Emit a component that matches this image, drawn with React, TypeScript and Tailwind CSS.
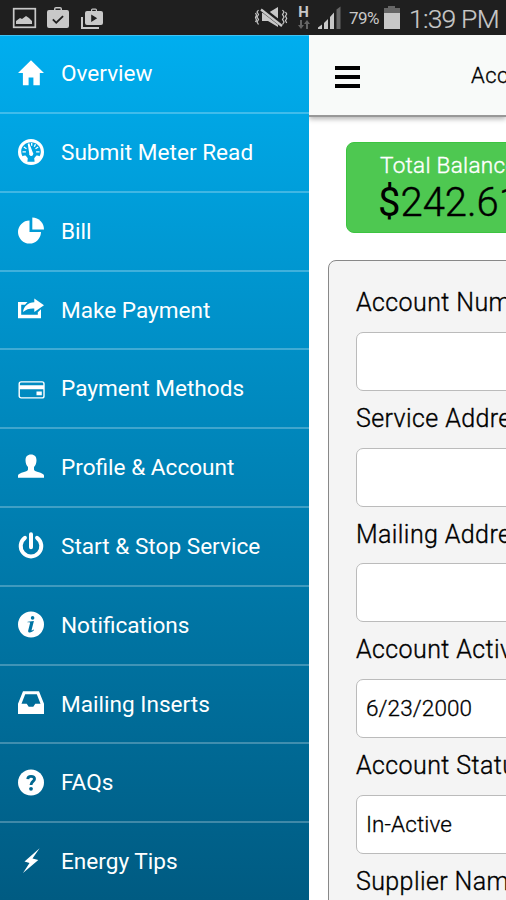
import type { ReactNode } from "react";

type MenuItem = { label: string; icon: ReactNode };

const menuItems: MenuItem[] = [
  {
    label: "Overview",
    icon: <path d="M13-.8 26 12.100h-4.200V24.200h-6.400v-7.800h-4.800v7.800H4.900V12.100H0z" />,
  },
  {
    label: "Submit Meter Read",
    icon: (
      <>
        <path
          fillRule="evenodd"
          d="M13 0a13 13 0 1 0 0 26 13 13 0 0 0 0-26Zm0 3.300c5.500 0 9.800 4 9.800 9.200 0 1.900-.4 3.300-1.300 4.700-.9-.5-2.100-.7-3.300-.5l-2 2.600.4 3.500H9.400l.4-3.500-2-2.600c-1.200-.2-2.400 0-3.300.5a8.700 8.700 0 0 1-1.300-4.700c0-5.200 4.300-9.200 9.800-9.200Z"
        />
        <path d="m9.700 4.800 1.600-.5 3.400 9a2.100 2.100 0 1 1-3.500.9z" />
        <path
          d="M4.500 12.800h3.400M18.100 12.800h3.400M5.800 8l2.700 1.700M20.200 8l-2.700 1.700M13.700 4v2.800M17.500 5.200l-1.200 2.600"
          stroke="currentColor"
          strokeWidth="1.300"
        />
      </>
    ),
  },
  {
    label: "Bill",
    icon: (
      <>
        <path d="M11.500 2.600v11.500H23A11.500 11.500 0 1 1 11.500 2.600Z" />
        <path d="M14.300-.4A11.700 11.700 0 0 1 26 11.600H14.300Z" />
      </>
    ),
  },
  {
    label: "Make Payment",
    icon: (
      <>
        <path d="M0 5h9.500L7 7.800H3.200v10h16.600v-2.600l3.200-3V21.200H0z" />
        <path d="M16.300 1.500 26 8.300l-9.700 6.800v-3.600C11.500 11.200 8.500 12.300 5 15 5.600 9.500 10 5.600 16.300 5.300z" />
      </>
    ),
  },
  {
    label: "Payment Methods",
    icon: (
      <>
        <rect x="1.200" y="5.900" width="24.800" height="16" rx="2" fill="none" stroke="currentColor" strokeWidth="1.400" />
        <path d="M1.200 9.200h24.800v4H1.200zM18.500 15.500h5.300v3.800h-5.300z" />
      </>
    ),
  },
  {
    label: "Profile & Account",
    icon: (
      <path d="M13 -.5c3.600 0 5.500 2.200 5.500 5.700 0 3-1 5.300-2.500 6.800v2.400c0 1.300 1.700 1.700 4 2.500 3.700 1.200 6 2 6 3.500v2.300H0v-2.300c0-1.500 2.300-2.300 6-3.500 2.300-.8 4-1.200 4-2.500v-2.400c-1.500-1.500-2.500-3.800-2.500-6.800C7.500 1.700 9.400-.5 13-.5Z" />
    ),
  },
  {
    label: "Start & Stop Service",
    icon: (
      <path
        d="M13 1.200v13M6.900 4.800a10.300 10.300 0 1 0 12.200 0"
        fill="none"
        stroke="currentColor"
        strokeWidth="4"
        strokeLinecap="round"
      />
    ),
  },
  {
    label: "Notifications",
    icon: (
      <path
        fillRule="evenodd"
        d="M13 -.5a13 13 0 1 0 0 26 13 13 0 0 0 0-26Zm1.600 4.600a1.800 1.800 0 1 1 0 3.600 1.800 1.800 0 0 1 0-3.600ZM9.600 9.700l6.300-.8-2.300 9c-.3 1.200.7.8 2-.4l.5.600c-1.800 2.400-6.600 3.800-5.900.3l1.900-7.500c.1-.4-.5-.6-2.500-.5Z"
      />
    ),
  },
  {
    label: "Mailing Inserts",
    icon: (
      <path
        fillRule="evenodd"
        d="M5 .3h16l5 12.500v10.200H0V12.800Zm2.200 3L3.500 12.800h5.200l2 3h4.600l2-3h5.200L18.800 3.300Z"
      />
    ),
  },
  {
    label: "FAQs",
    icon: (
      <>
        <circle cx="13" cy="12.500" r="13" />
        <path
          className="text-[#00678f]"
          d="M9.800 9.100c.1-2 1.400-2.700 3.200-2.700 2.200 0 3.500.9 3.500 2.600 0 2.500-3.500 2.500-3.500 6"
          fill="none"
          stroke="currentColor"
          strokeWidth="2.900"
        />
        <circle cx="13" cy="18.800" r="1.900" className="fill-[#00678f]" />
      </>
    ),
  },
  {
    label: "Energy Tips",
    icon: <path d="M21.600-.8 14.500 9.500l5.800 1.400L5 23.900l6.500-9.800-5-1.600z" />,
  },
];

const fields = [
  { label: "Account Number", value: "" },
  { label: "Service Address", value: "" },
  { label: "Mailing Address", value: "" },
  { label: "Account Active Date", value: "6/23/2000" },
  { label: "Account Status", value: "In-Active" },
  { label: "Supplier Name", value: "" },
];

function StatusBar() {
  return (
    <div className="flex h-[35px] shrink-0 items-center bg-[#1f1f1f] text-[#c8c8c8]">
      <svg className="h-[35px] w-[110px]" viewBox="0 0 110 35" fill="currentColor">
        <rect x="13.700" y="8.700" width="21.600" height="18.600" fill="none" stroke="currentColor" strokeWidth="1.700" />
        <path d="M16 24v-3l4-3 2 1 4-3 3 2 3 3v3z" />
        <path
          fillRule="evenodd"
          d="M49 10h5V9q0-2 2-2h4q2 0 2 2v1h5q2 0 2 2v14q0 2-2 2H49q-2 0-2-2V12q0-2 2-2Zm6.500 0h5V8.500h-5Zm-2 8.700-1.300 1.300 4 4 7.500-7.300-1.300-1.300-6.200 6z"
        />
        <path
          fillRule="evenodd"
          d="M87 11h4v-1q0-1.500 1.500-1.500h3Q97 8.500 97 10v1h4q2 0 2 2v10q0 2-2 2H87q-2 0-2-2V13q0-2 2-2Zm5.200 0h3.600v-1.300h-3.600Zm-1 3.500v7.500l6-3.700z"
        />
        <path d="M81 17h2v10h16v2H81z" />
      </svg>
      <svg className="ml-auto h-[35px] w-[100px] shrink-0" viewBox="246 0 100 35" fill="currentColor">
        <path d="M262 13h6l10-6v20l-10-6h-6z" />
        <path d="M260 7.500l23 18" stroke="#1f1f1f" strokeWidth="5" />
        <path d="M261 9.500l21 16.500" stroke="currentColor" strokeWidth="2.300" />
        <path
          d="m258.500 10-1.500 2 1.500 2.500-1.500 2.500 1.500 2.500-1.500 2.500 1.500 2.500M255.500 13l1 2-1 2.500 1 2.500-1 2M282.500 10l1.500 2-1.500 2.500 1.500 2.500-1.500 2.500 1.500 2.500-1.500 2.500M285.500 12l1.200 2-1.200 2 1.200 2.500-1.200 2 1.200 2.500"
          fill="none"
          stroke="currentColor"
          strokeWidth="1.200"
        />
        <text x="298.300" y="17" className="font-['Roboto'] text-[15px] font-bold">H</text>
        <path className="fill-[#666]" d="M300 20h2v5h2l-3 4-3-4h2zM306 29h2v-5h2l-3-4-3 4h2z" />
        <path className="fill-[#666]" d="M336.500 9.500l4-3V29h-4z" />
        <path d="M318 27.500l4-3V29h-4zM324 23l4-4v10h-4zM330 17l4-4.500V29h-4z" />
      </svg>
      <span className="w-[37px] pt-[2px] pl-[3px] text-[17px] tracking-[-0.5px]">79%</span>
      <svg className="h-[35px] w-[18px] shrink-0" viewBox="383 0 18 35" fill="currentColor">
        <path className="fill-[#666]" d="M388 6h7v2h5v6h-16V8h4z" />
        <path d="M384 13h16v16h-16z" />
      </svg>
      <span className="w-[105px] pt-[2px] pl-[8px] text-[26.500px] font-light tracking-[-0.8px] whitespace-nowrap [-webkit-text-stroke:0.2px]">
        1:39 PM
      </span>
    </div>
  );
}

function Sidebar() {
  return (
    <nav className="w-[309px] shrink-0 overflow-hidden bg-linear-to-b from-[#00aeef] to-[#005b82] text-white">
      <div className="h-px bg-white/25" />
      <div className="-mt-[0.8px]">
        {menuItems.map((item) => (
          <div
            key={item.label}
            className="flex h-[78.8px] items-center gap-[17px] border-b-2 border-white/25 pl-[18px]"
          >
            <svg className="size-[26px] shrink-0 overflow-visible" viewBox="0 0 26 26" fill="currentColor">
              {item.icon}
            </svg>
            <span className="pt-px text-[22.600px] whitespace-nowrap">{item.label}</span>
          </div>
        ))}
      </div>
    </nav>
  );
}

function AccountPage() {
  return (
    <main className="flex w-[197px] shrink-0 flex-col overflow-hidden bg-white text-black">
      <header className="z-10 flex h-[82px] shrink-0 items-center border-b-2 border-[#989898] bg-[#f8faf9] pl-[26px] shadow-[0_2px_5px_rgba(0,0,0,0.3)]">
        <div className="flex w-[25px] shrink-0 flex-col gap-[5px] pt-[3px]">
          <span className="h-1 bg-black" />
          <span className="h-1 bg-black" />
          <span className="h-1 bg-black" />
        </div>
        <h1 className="ml-[111px] text-[22px] font-light tracking-[0.4px] whitespace-nowrap [-webkit-text-stroke:0.3px]">
          Account
        </h1>
      </header>
      <section className="mt-[25px] ml-[37px] h-[91px] w-[300px] shrink-0 rounded-lg border border-[#3cc440] bg-[#4ec851] pt-[7px] pl-[33px]">
        <p className="text-[22.500px] leading-[30px] font-light tracking-[0.3px] text-white [-webkit-text-stroke:0.4px]">
          Total Balance
        </p>
        <p className="-ml-0.5 pt-px text-[40px] leading-[44px] font-light [-webkit-text-stroke:0.4px]">
          <span className="font-normal [-webkit-text-stroke:0]">$</span>242.61
        </p>
      </section>
      <section className="mt-[27px] ml-[19px] w-[340px] shrink-0 rounded-lg border border-[#888] bg-[#f4f4f4] pt-[14px] pl-[27px]">
        {fields.map((field) => (
          <div key={field.label} className="h-[115.7px]">
            <label className="block h-[57px] pt-[10.300px] text-[25px] leading-[36px] font-light tracking-[0.4px] whitespace-nowrap [-webkit-text-stroke:0.35px]">
              {field.label}
            </label>
            <div className="flex h-[59px] items-center rounded-[7px] border border-[#bbb] bg-white pt-px pl-[9px] text-[22.500px] font-light tracking-[0.1px] [-webkit-text-stroke:0.3px]">
              {field.value}
            </div>
          </div>
        ))}
      </section>
    </main>
  );
}

export default function App() {
  return (
    <div className="flex h-[900px] w-[506px] flex-col overflow-hidden font-['Roboto',sans-serif]">
      <StatusBar />
      <div className="flex min-h-0 flex-1">
        <Sidebar />
        <AccountPage />
      </div>
    </div>
  );
}
